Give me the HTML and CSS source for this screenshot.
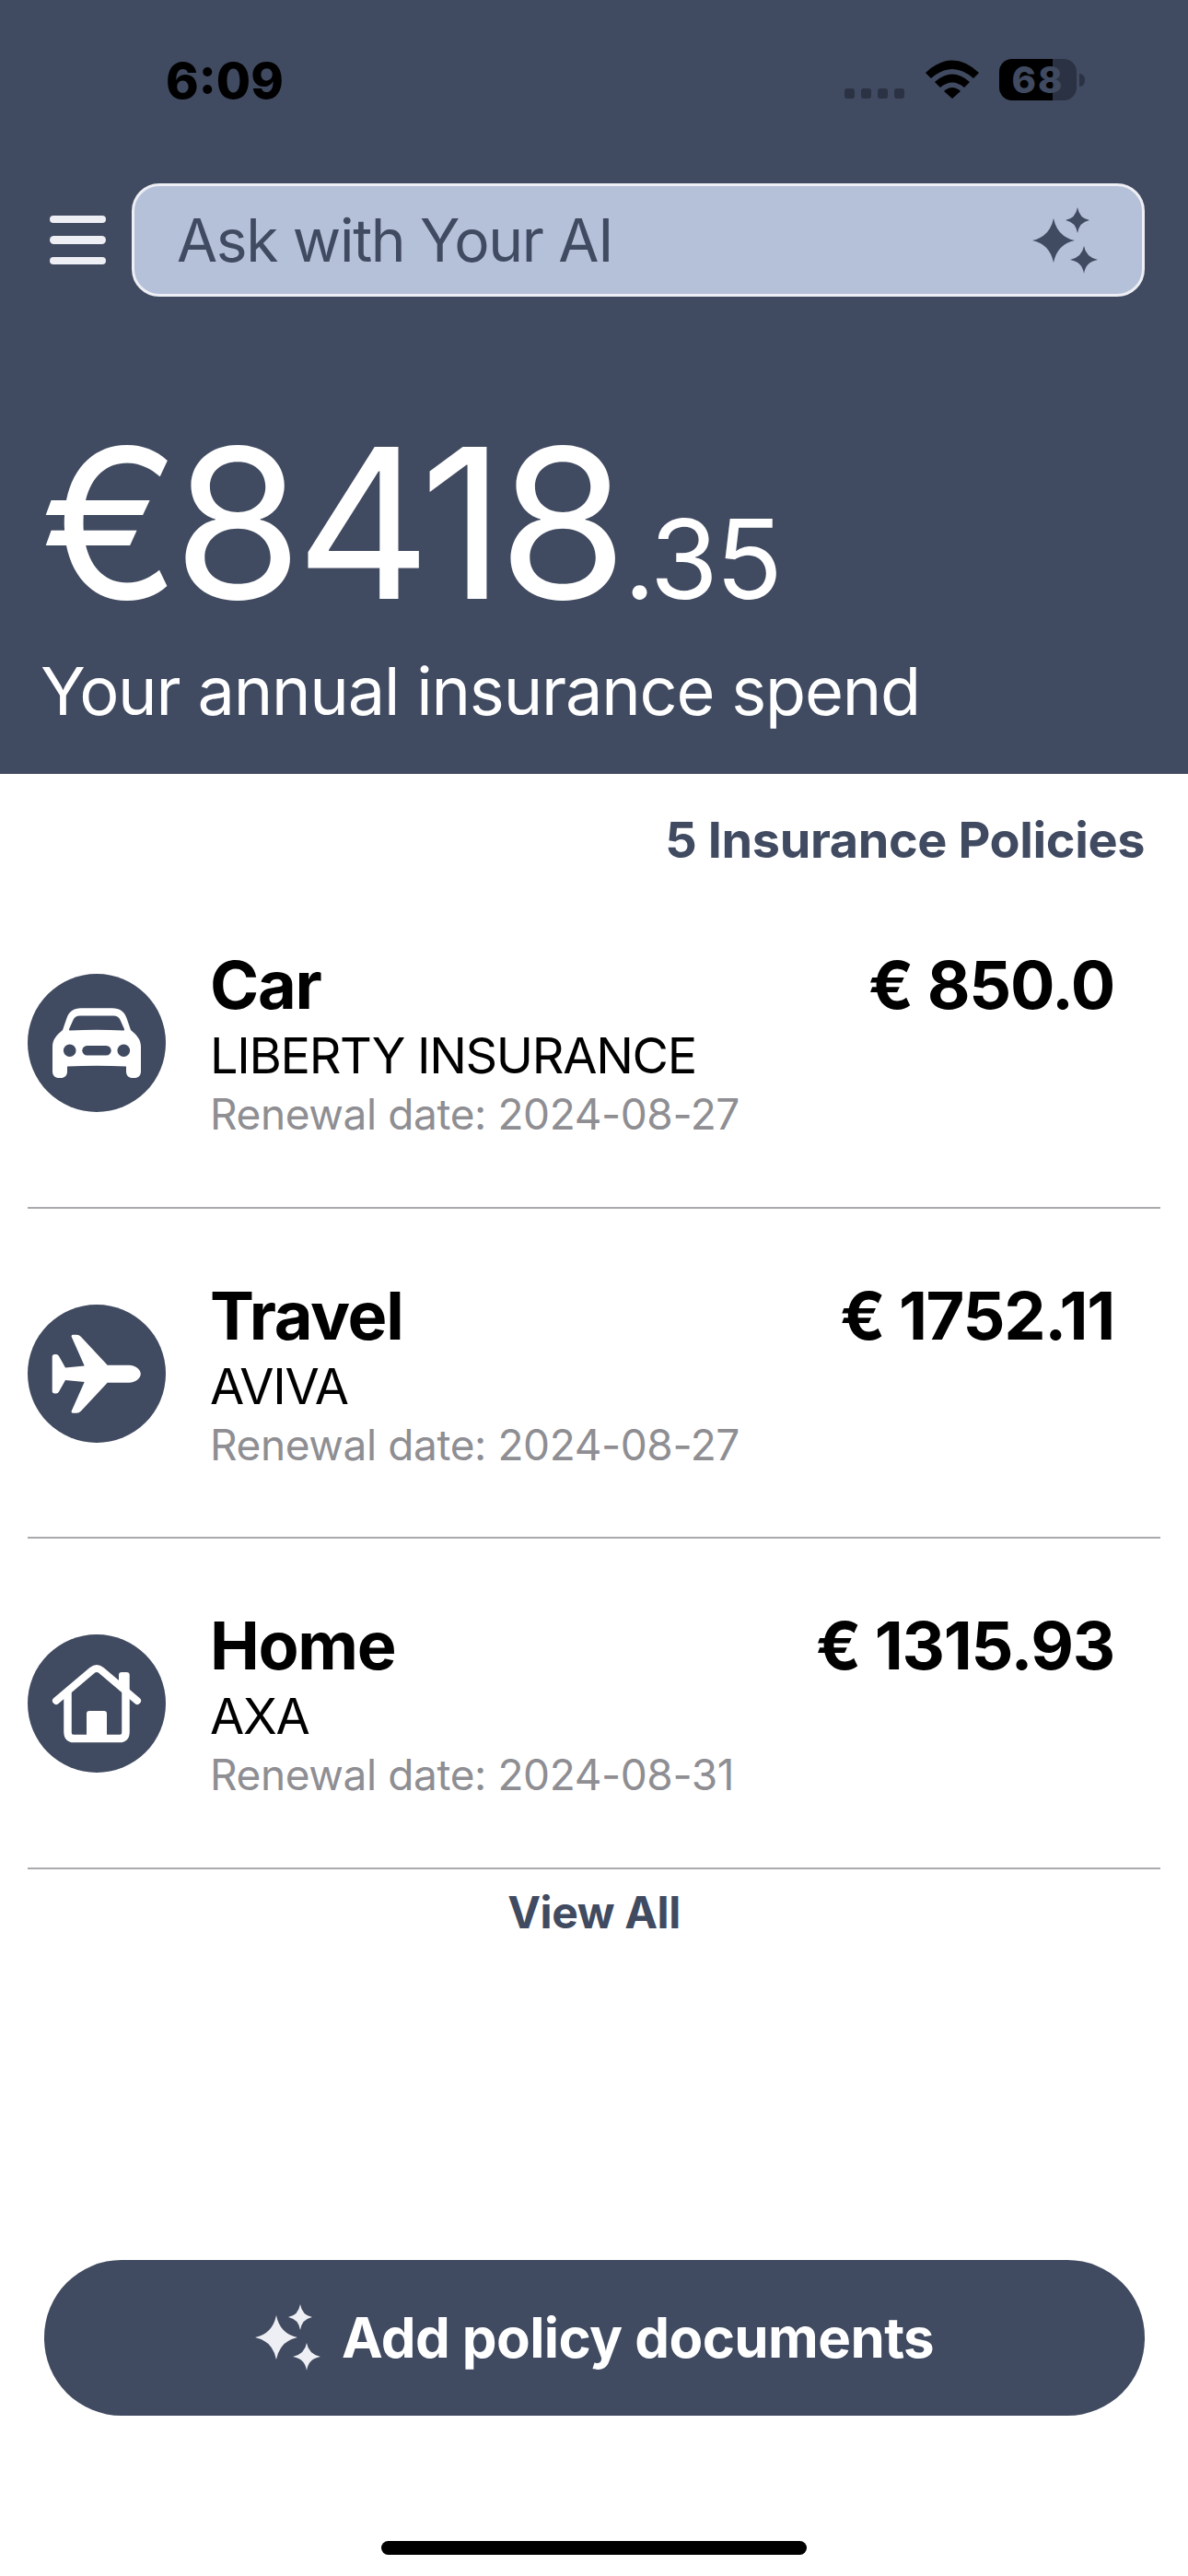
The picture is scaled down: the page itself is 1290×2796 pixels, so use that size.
FILE: index.html
```html
<!DOCTYPE html>
<html lang="en">
<head>
    <meta charset="UTF-8">
    <meta name="viewport" content="width=device-width, initial-scale=1.0">
    <title>Insurance</title>
    <link rel="stylesheet" href="styles.css">
</head>
<body>
    <svg class="defs" aria-hidden="true">
        <symbol id="sparkles" viewBox="0 0 72 72">
            <path d="M23 12 Q27 32 46 36 Q27 40 23 60 Q19 40 0 36 Q19 32 23 12Z"/>
            <path d="M49 0 Q51 12 62 14 Q51 16 49 28 Q47 16 36 14 Q47 12 49 0Z"/>
            <path d="M56 42 Q58 54 71 57 Q58 59 56 72 Q54 59 41 57 Q54 54 56 42Z"/>
        </symbol>
    </svg>

    <header class="top">
        <div class="status-bar">
            <span class="time">6:09</span>
            <div class="status-icons">
                <div class="signal"><i></i><i></i><i></i><i></i></div>
                <svg class="wifi" viewBox="0 0 58 42">
                    <path d="M0 14 Q29 -13 58 14 L52 20 Q29 0 6 20Z"/>
                    <path d="M10 24 Q29 7 48 24 L42 30 Q29 19 16 30Z"/>
                    <path d="M20 34 Q29 26 38 34 L29 42Z"/>
                </svg>
                <div class="battery">68</div>
                <div class="battery-nub"></div>
            </div>
        </div>

        <div class="search-row">
            <div class="menu"><i></i><i></i><i></i></div>
            <div class="search">
                <span>Ask with Your AI</span>
                <svg class="sparkle"><use href="#sparkles"/></svg>
            </div>
        </div>

        <div class="spend">
            <div class="spend-amount">€8418<small>.35</small></div>
            <div class="spend-label">Your annual insurance spend</div>
        </div>
    </header>

    <main class="content">
        <div class="policy-count">5 Insurance Policies</div>

        <div class="policy">
            <svg class="policy-icon" viewBox="0 0 150 150">
                <circle cx="75" cy="75" r="75" fill="#404a60"/>
                <path fill="#fff" fill-rule="evenodd" d="M58 37.3H92C100 37.3 105 41 107.5 48L112 61C118 66 123 71 123 79V106C123 110.5 120 113 116 113H114C110 113 107 110.5 107 106V100.6Q75 99 43 100.6V106C43 110.5 40 113 36 113H34C30 113 27 110.5 27 106V79C27 71 32 66 38 61L42.5 48C45 41 50 37.3 58 37.3ZM57 45.6C53 45.6 50.5 47.5 49.5 50L45 60Q44.5 61.8 46.5 61.6Q75 60 103.5 61.6Q105.5 61.8 105 60L100.5 50C99.5 47.5 97 45.6 93 45.6Z"/>
                <circle cx="45.7" cy="83.3" r="6.8" fill="#404a60"/>
                <circle cx="104.3" cy="83.3" r="6.8" fill="#404a60"/>
                <rect x="59.3" y="78" width="31.4" height="10.5" rx="5.2" fill="#404a60"/>
            </svg>
            <div class="policy-info">
                <div class="policy-head">
                    <span>Car</span>
                    <span>€ 850.0</span>
                </div>
                <div class="policy-company">LIBERTY INSURANCE</div>
                <div class="policy-renewal">Renewal date: 2024-08-27</div>
            </div>
        </div>

        <div class="policy">
            <svg class="policy-icon" viewBox="0 0 150 150">
                <circle cx="75" cy="75" r="75" fill="#404a60"/>
                <path fill="#fff" d="M47.7 35Q47 32.8 49.5 32.8H53Q56 32.8 58 35L86.7 65.7H110C118 65.7 122.8 71 122.8 75.3C122.8 79.5 118 84.7 110 84.7H86.7L58 115.5Q56 117.8 53 117.8H49.5Q47 117.8 47.7 115.5L61.7 84L41 82L34 94.5Q33 96.4 31 96.4H29.5Q26.7 96.4 26.7 94V56.5Q26.7 54 29.5 54H31Q33 54 34 56L41 68.6L61.7 66.5Z"/>
            </svg>
            <div class="policy-info">
                <div class="policy-head">
                    <span>Travel</span>
                    <span>€ 1752.11</span>
                </div>
                <div class="policy-company">AVIVA</div>
                <div class="policy-renewal">Renewal date: 2024-08-27</div>
            </div>
        </div>

        <div class="policy">
            <svg class="policy-icon" viewBox="0 0 150 150">
                <circle cx="75" cy="75" r="75" fill="#404a60"/>
                <path fill="none" stroke="#fff" stroke-width="8" stroke-linecap="round" d="M31 72L70 39Q75 35 80 39L119 72"/>
                <path fill="none" stroke="#fff" stroke-width="8.5" d="M43.5 63V106Q43.5 113 50 113H100Q106.5 113 106.5 106V63"/>
                <path fill="#fff" d="M99 52V44Q99 41 102 41H107.5Q110.7 41 110.7 44V64Z"/>
                <path fill="#fff" d="M64 113V86Q64 83 67 83H83Q86 83 86 86V113Z"/>
            </svg>
            <div class="policy-info">
                <div class="policy-head">
                    <span>Home</span>
                    <span>€ 1315.93</span>
                </div>
                <div class="policy-company">AXA</div>
                <div class="policy-renewal">Renewal date: 2024-08-31</div>
            </div>
        </div>

        <div class="view-all">View All</div>

        <div class="add-button">
            <svg class="sparkle sparkle-light"><use href="#sparkles"/></svg>
            <span>Add policy documents</span>
        </div>

        <div class="home-bar"></div>
    </main>
</body>
</html>
```

FILE: styles.css
```css
* {
    margin: 0;
    padding: 0;
    box-sizing: border-box;
}

body {
    width: 1290px;
    height: 2796px;
    background-color: #fff;
    color: #000;
    font-family: 'Inter', 'Liberation Sans', sans-serif;
    display: flex;
    flex-direction: column;
    overflow: hidden;
}

.defs {
    display: none;
}

/* Top dark block */
.top {
    background-color: #404a60;
    height: 840px;
    color: #fff;
    flex-shrink: 0;
}

.status-bar {
    display: flex;
    justify-content: space-between;
    align-items: flex-start;
    height: 199px;
    padding: 56px 112px 0 180px;
}

.time {
    font-size: 54px;
    line-height: 64px;
    font-weight: 800;
    color: #000;
}

.status-icons {
    display: flex;
    align-items: flex-start;
    padding-top: 8px;
}

.signal {
    display: flex;
    gap: 7px;
    margin-top: 32px;
    margin-right: 23px;
}

.signal i {
    width: 11px;
    height: 11px;
    border-radius: 3px;
    background-color: #2b3244;
}

.wifi {
    width: 58px;
    height: 42px;
    margin-top: 1px;
    margin-right: 22px;
    fill: #000;
}

.battery {
    width: 84px;
    height: 45px;
    border-radius: 14px;
    background: linear-gradient(90deg, #000 58px, #2b3244 58px);
    color: #404a60;
    font-size: 40px;
    line-height: 45px;
    font-weight: 800;
    letter-spacing: 2px;
    text-align: center;
}

.battery-nub {
    width: 6px;
    height: 14px;
    margin-top: 16px;
    margin-left: 3px;
    border-radius: 0 6px 6px 0;
    background-color: #2b3244;
}

.search-row {
    display: flex;
    align-items: center;
    padding: 0 47px 0 54px;
    gap: 28px;
}

.menu {
    display: flex;
    flex-direction: column;
    gap: 14px;
    width: 61px;
}

.menu i {
    height: 8.5px;
    border-radius: 5px;
    background-color: #eeeff4;
}

.search {
    flex: 1;
    height: 123px;
    display: flex;
    align-items: center;
    justify-content: space-between;
    padding: 0 47px 0 46px;
    background-color: #b5c0d9;
    border: 3px solid #eeeff4;
    border-radius: 30px;
    color: #404a60;
    font-size: 64px;
    letter-spacing: -1.3px;
}

.sparkle {
    width: 72px;
    height: 72px;
    fill: #404a60;
    flex-shrink: 0;
}

.sparkle-light {
    fill: #eeeff4;
}

.spend {
    padding: 141px 0 0 44px;
}

.spend-amount {
    font-size: 227px;
    line-height: 210px;
    font-weight: 400;
    letter-spacing: -7.3px;
}

.spend-amount small {
    font-size: 120px;
    letter-spacing: -2.8px;
    margin-left: 3px;
}

.spend-label {
    font-size: 72px;
    line-height: 88px;
    letter-spacing: -1.2px;
    margin-top: -6px;
}

/* Policy list */
.content {
    flex: 1;
    display: flex;
    flex-direction: column;
    padding: 0 30px;
}

.policy-count {
    padding: 41px 17px 0 0;
    height: 113px;
    text-align: right;
    font-size: 54px;
    line-height: 62px;
    font-weight: 700;
    letter-spacing: -0.4px;
    color: #404a60;
}

.policy {
    height: 358.5px;
    display: flex;
    align-items: flex-start;
    gap: 48px;
    border-bottom: 2px solid #a9a9ae;
}

.policy-icon {
    width: 150px;
    height: 150px;
    flex-shrink: 0;
    margin-top: 104px;
}

.policy-info {
    flex: 1;
    padding-right: 50px;
    padding-top: 74px;
}

.policy-head {
    display: flex;
    justify-content: space-between;
    font-size: 72px;
    line-height: 84px;
    font-weight: 700;
    letter-spacing: -1.3px;
}

.policy-company {
    font-size: 54px;
    line-height: 62px;
    letter-spacing: -1.3px;
    margin-top: 4px;
}

.policy-renewal {
    font-size: 46px;
    line-height: 54px;
    letter-spacing: -0.4px;
    color: #8e8e93;
    margin-top: 5px;
}

.view-all {
    text-align: center;
    font-size: 48px;
    line-height: 60px;
    font-weight: 700;
    letter-spacing: -0.4px;
    color: #404a60;
    margin-top: 17px;
}

.add-button {
    margin: 347px 17px 0 18px;
    height: 169px;
    display: flex;
    align-items: center;
    justify-content: center;
    gap: 22px;
    border-radius: 84px;
    background-color: #404a60;
    color: #fff;
    font-size: 60px;
    font-weight: 700;
    letter-spacing: -0.6px;
}

.home-bar {
    width: 462px;
    height: 15px;
    margin: 136px auto 0;
    border-radius: 8px;
    background-color: #000;
}
```
